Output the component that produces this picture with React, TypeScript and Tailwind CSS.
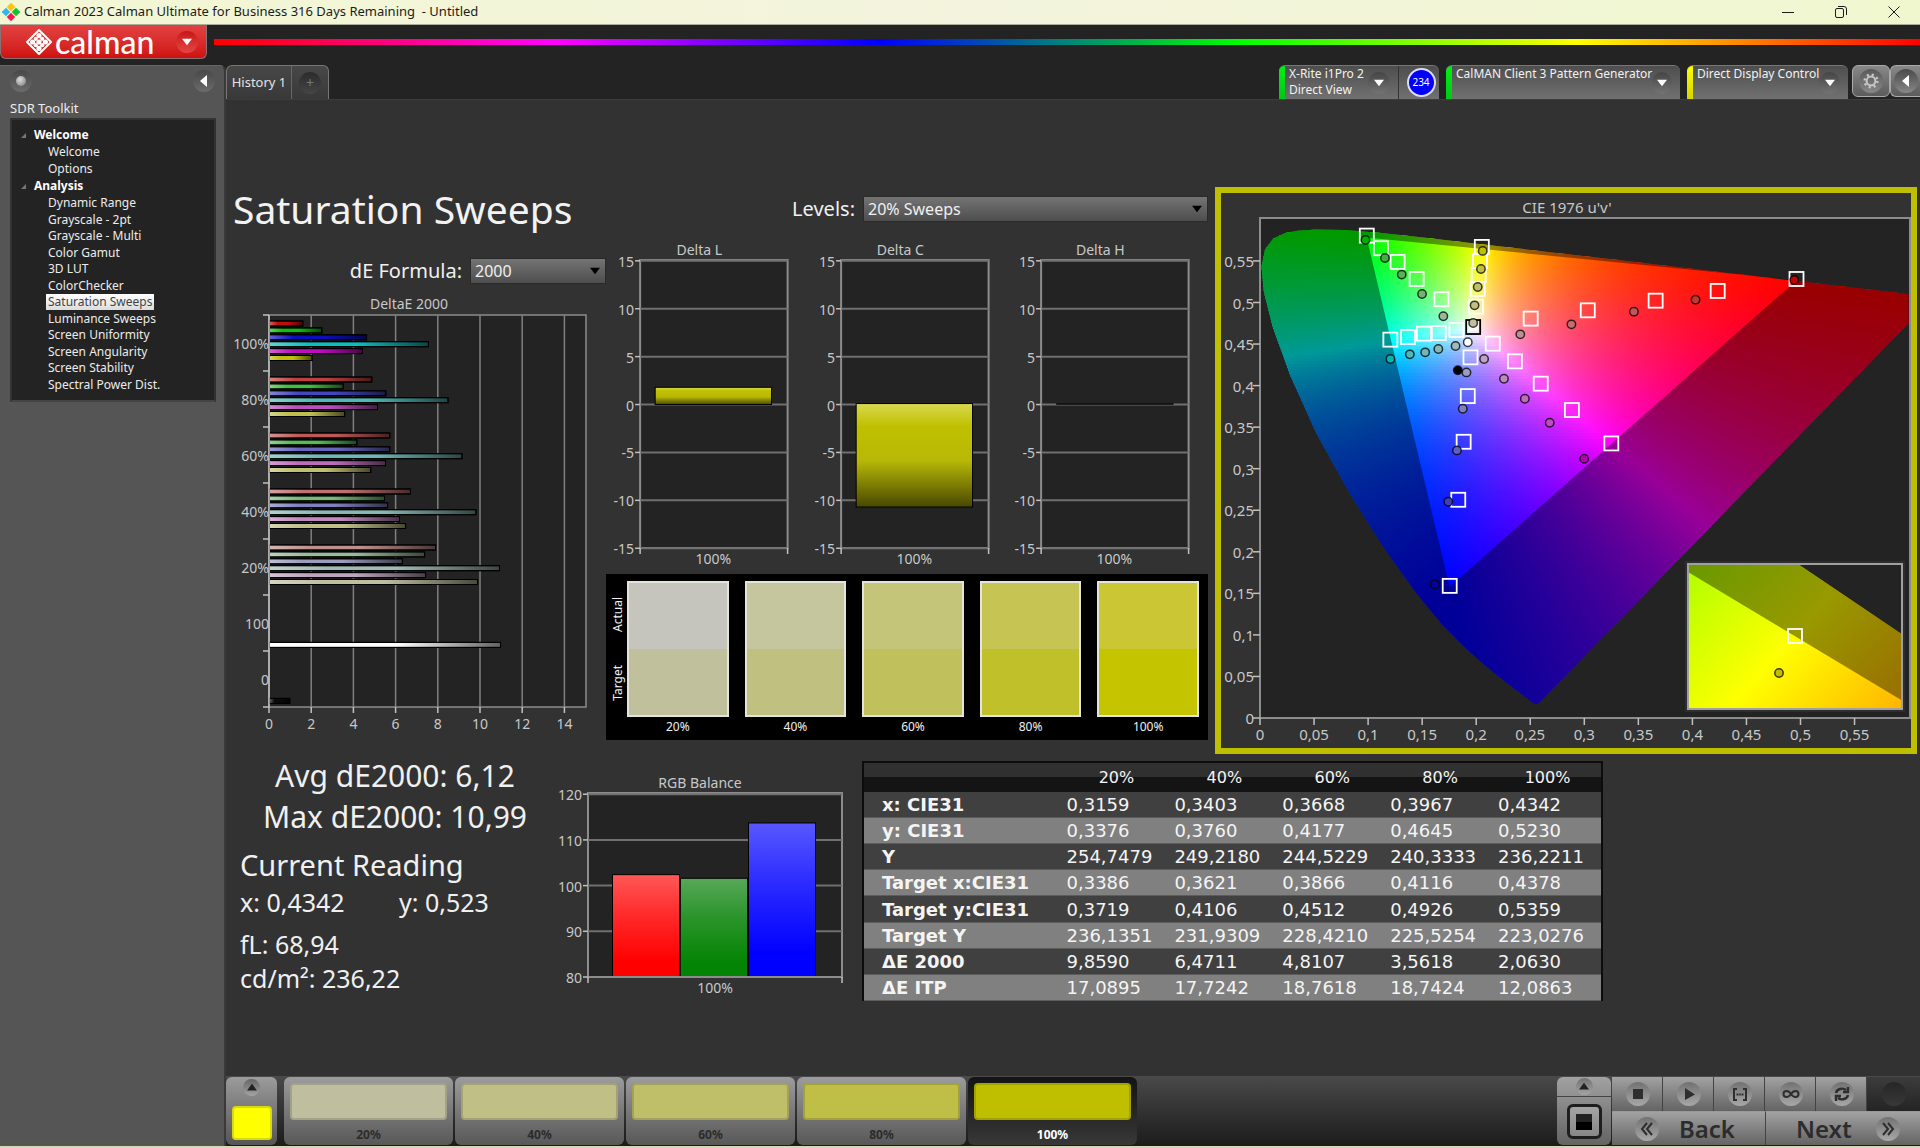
import { useMemo } from 'react';
import type { ReactNode } from 'react';

const treeAnalysis = [
    'Dynamic Range',
    'Grayscale - 2pt',
    'Grayscale - Multi',
    'Color Gamut',
    '3D LUT',
    'ColorChecker',
    'Saturation Sweeps',
    'Luminance Sweeps',
    'Screen Uniformity',
    'Screen Angularity',
    'Screen Stability',
    'Spectral Power Dist.',
];

/* ---------- small controls ---------- */

function Triangle({ dir, className }: { dir: 'down' | 'left' | 'up'; className: string }) {
    const d = { down: 'M0 2H12L6 10Z', left: 'M9 0V12L2 6Z', up: 'M0 9H12L6 1Z' }[dir];
    return (
        <svg viewBox="0 0 12 12" className={className} aria-hidden="true">
            <path d={d} fill="currentColor" />
        </svg>
    );
}

interface DropProps {
    id: string;
    value: string;
    className: string;
}

function DropDown({ id, value, className }: DropProps) {
    return (
        <div className={`relative ${className}`}>
            <select
                id={id}
                className="block h-[26px] w-full appearance-none border border-[#2a2a2a] bg-linear-to-b from-[#747474] to-[#4e4e4e] pl-1 text-base leading-6 text-[#f0f0f0]"
            >
                <option>{value}</option>
            </select>
            <Triangle dir="down" className="pointer-events-none absolute top-2 right-1.5 size-2.5 text-black" />
        </div>
    );
}

/* ---------- top of the window ---------- */

function TitleBar() {
    return (
        <div className="flex h-[25px] items-center border-b border-[#a9ac96] bg-linear-to-r from-[#f2f7d3] via-[#f4f4de] to-[#f0f7cf] text-[#1c1c1c]">
            <svg viewBox="0 0 18 18" className="ml-[2px] size-[18px]" aria-hidden="true">
                <rect x="6" y="1" width="6" height="6" transform="rotate(45 9 4)" fill="#ffc20e" />
                <rect x="1" y="6" width="6" height="6" transform="rotate(45 4 9)" fill="#35b6e8" />
                <rect x="11" y="6" width="6" height="6" transform="rotate(45 14 9)" fill="#10c430" />
                <rect x="6" y="11" width="6" height="6" transform="rotate(45 9 14)" fill="#ff1450" />
            </svg>
            <span className="ml-1 text-[13px] whitespace-pre">
                {'Calman 2023 Calman Ultimate for Business 316 Days Remaining  - Untitled'}
            </span>
            <div className="ml-auto flex">
                <button aria-label="Minimize" className="flex h-6 w-[53px] items-center justify-center">
                    <svg viewBox="0 0 12 12" className="size-3" stroke="currentColor">
                        <path d="M0 6.5H12" />
                    </svg>
                </button>
                <button aria-label="Restore" className="flex h-6 w-[53px] items-center justify-center">
                    <svg viewBox="0 0 12 12" className="size-3" stroke="currentColor" fill="none">
                        <rect x="0.5" y="2.5" width="8" height="9" rx="1.5" />
                        <path d="M3 0.5H9Q11.5 0.5 11.5 3V9" />
                    </svg>
                </button>
                <button aria-label="Close" className="flex h-6 w-[53px] items-center justify-center">
                    <svg viewBox="0 0 12 12" className="size-3" stroke="currentColor">
                        <path d="M0.5 0.5L11.5 11.5M11.5 0.5L0.5 11.5" />
                    </svg>
                </button>
            </div>
        </div>
    );
}

function LogoRow() {
    return (
        <div className="flex h-10 items-start">
            <button
                aria-label="Calman menu"
                className="flex h-[34px] w-[207px] shrink-0 items-center rounded-b-md border border-t-0 border-[#8a7272] bg-linear-to-b from-[#e24141] to-[#cf0f0f] pl-6 text-white"
            >
                <svg viewBox="0 0 28 28" className="size-7" fill="none" stroke="#fff" aria-hidden="true">
                    <path d="M14 2L26 14L14 26L2 14Z" strokeWidth="2" strokeLinejoin="round" />
                    <g fill="#fff" stroke="none">
                        <circle cx="14" cy="7.6" r="2.6" />
                        <circle cx="10.8" cy="10.8" r="2.1" />
                        <circle cx="17.2" cy="10.8" r="2.1" />
                        <circle cx="7.6" cy="14" r="2.6" />
                        <circle cx="14" cy="14" r="2.6" />
                        <circle cx="20.4" cy="14" r="2.6" />
                        <circle cx="10.8" cy="17.2" r="2.1" />
                        <circle cx="17.2" cy="17.2" r="2.1" />
                        <circle cx="14" cy="20.4" r="2.6" />
                    </g>
                </svg>
                <span className="ml-[2px] font-[Lato,sans-serif] text-[32px] leading-8 font-medium">calman</span>
                <span className="mr-2 ml-auto flex size-[22px] items-center justify-center rounded-full bg-linear-to-b from-[#c81414] to-[#e44444]">
                    <Triangle dir="down" className="size-2.5" />
                </span>
            </button>
            <div className="mt-3.5 ml-[7px] h-1.5 flex-1 bg-linear-[90deg,#f00,#f0f_20%,#00f_39%,#0f0_60%,#ff0_80%,#f00]" />
        </div>
    );
}

interface DeviceProps {
    stripe: string;
    lines: string[];
    width: string;
    children?: ReactNode;
}

function Device({ stripe, lines, width, children }: DeviceProps) {
    return (
        <div className={`flex h-[34px] overflow-hidden rounded-t-md border-t border-[#777] bg-linear-to-b from-[#4e4e4e] to-[#717171] ${width}`}>
            <div className={`w-[6px] shrink-0 ${stripe}`} />
            <div className="flex-1 pl-1 text-xs leading-4 whitespace-nowrap text-[#f2f2f2]">
                {lines.map((line) => (
                    <div key={line}>{line}</div>
                ))}
            </div>
            <button
                aria-label={`${lines[0]} menu`}
                className="mt-1.5 mr-2 flex size-[22px] items-center justify-center self-start rounded-full bg-linear-to-b from-[#454545] to-[#747474] text-white"
            >
                <Triangle dir="down" className="size-2.5" />
            </button>
            {children}
        </div>
    );
}

function TabRow() {
    return (
        <div className="flex h-[34px] bg-[#232323]">
            <div className="flex h-[34px] items-stretch rounded-t-md border border-b-0 border-[#777] bg-linear-to-b from-[#484848] to-[#383838]">
                <button className="w-[65px] border-r border-[#666] text-[13px] text-[#e4e4e4]">History 1</button>
                <button aria-label="Add history" className="flex w-9 items-center justify-center">
                    <span className="flex size-[22px] items-center justify-center rounded-full bg-linear-to-b from-[#2c2c2c] to-[#454545] text-sm text-[#777]">
                        +
                    </span>
                </button>
            </div>
            <div className="ml-auto flex gap-[7px]">
                <Device stripe="bg-linear-to-b from-[#00f010] to-[#00c818]" lines={['X-Rite i1Pro 2', 'Direct View']} width="w-[160px]">
                    <div className="flex w-[41px] items-center justify-center border-l border-[#333] pl-1">
                        <span className="flex size-[29px] items-center justify-center rounded-full border-2 border-[#dcdcf4] bg-[#0000fa] text-[10px] text-white">
                            234
                        </span>
                    </div>
                </Device>
                <Device stripe="bg-linear-to-b from-[#00f010] to-[#00c818]" lines={['CalMAN Client 3 Pattern Generator']} width="w-[234px]" />
                <Device stripe="bg-linear-to-b from-[#ffff00] to-[#d4d400]" lines={['Direct Display Control']} width="w-[161px]" />
            </div>
            <div className="ml-1 flex h-8">
                <button
                    aria-label="Settings"
                    className="flex w-[38px] items-center justify-center rounded-md border border-[#aaa] bg-linear-to-b from-[#888] to-[#5c5c5c]"
                >
                    <span className="flex size-6 items-center justify-center rounded-full bg-linear-to-b from-[#5a5a5a] to-[#888]">
                        <svg viewBox="0 0 20 20" className="size-4" fill="none" stroke="#c8c8c8" aria-hidden="true">
                            <circle cx="10" cy="10" r="5.5" strokeWidth="2.5" />
                            <circle cx="10" cy="10" r="8" strokeWidth="3" strokeDasharray="2.6 3.683" />
                        </svg>
                    </span>
                </button>
                <button
                    aria-label="Collapse right panel"
                    className="flex w-[30px] items-center justify-center rounded-l-md border border-r-0 border-[#aaa] bg-linear-to-b from-[#888] to-[#5c5c5c] text-white"
                >
                    <span className="flex size-6 items-center justify-center rounded-full bg-linear-to-b from-[#4a4a4a] to-[#888]">
                        <Triangle dir="left" className="size-3" />
                    </span>
                </button>
            </div>
        </div>
    );
}

/* ---------- workflow tree ---------- */

function Sidebar() {
    return (
        <aside className="w-[226px] shrink-0 rounded-tr-md border-t border-r-2 border-t-[#666] border-r-[#3a3a3a] bg-[#555] pr-2 pl-[10px]">
            <div className="flex h-[30px] items-center justify-between">
                <span className="flex size-[22px] items-center justify-center rounded-full bg-linear-to-b from-[#484848] to-[#6c6c6c]">
                    <span className="size-2.5 rounded-full bg-radial-[at_40%_35%] from-[#ddd] to-[#777]" />
                </span>
                <button
                    aria-label="Collapse workflow"
                    className="mr-px flex size-[22px] items-center justify-center rounded-full bg-linear-to-b from-[#484848] to-[#6c6c6c] text-white"
                >
                    <Triangle dir="left" className="size-3" />
                </button>
            </div>
            <h2 className="mt-[2px] text-[13px] leading-[20px] text-[#ececec]">SDR Toolkit</h2>
            <nav className="h-[284px] border-2 border-[#333] border-b-[#444] bg-[#232323] pt-1.5 text-xs text-[#ececec]">
                <div className="flex h-[18px] items-center font-bold text-white">
                    <TreeMark />
                    Welcome
                </div>
                <ul className="grid h-[33px] pl-9">
                    <li className="flex items-center"><a href="#welcome">Welcome</a></li>
                    <li className="flex items-center"><a href="#options">Options</a></li>
                </ul>
                <div className="flex h-[18px] items-center font-bold text-white">
                    <TreeMark />
                    Analysis
                </div>
                <ul className="grid h-[198px] pl-9">
                    {treeAnalysis.map((item) => (
                        <li key={item} className="flex items-center">
                            <a
                                href={`#${item}`}
                                className={
                                    item === 'Saturation Sweeps'
                                        ? '-ml-0.5 bg-linear-to-b from-white to-[#dcdcdc] px-0.5 leading-4 text-[#444]'
                                        : 'leading-4'
                                }
                            >
                                {item}
                            </a>
                        </li>
                    ))}
                </ul>
            </nav>
        </aside>
    );
}

function TreeMark() {
    return (
        <svg viewBox="0 0 6 6" className="mr-2 ml-[9px] size-[5px]" aria-hidden="true">
            <path d="M6 0V6H0Z" fill="#777" />
        </svg>
    );
}

/* ---------- DeltaE bars ---------- */

const bands: { label: string; bars: [string, number][] }[] = [
    { label: '100%', bars: [['#bf0c0c', 1.58], ['#0cbf0c', 2.48], ['#0c0cbf', 4.6], ['#0cbfbf', 7.53], ['#bf0cbf', 4.4], ['#bfbf0c', 2.02]] },
    { label: '80%', bars: [['#bf4040', 4.85], ['#40bf40', 3.49], ['#4545bf', 5.51], ['#50b8b8', 8.46], ['#bf4cbf', 5.12], ['#bfbf50', 3.56]] },
    { label: '60%', bars: [['#bf5858', 5.7], ['#58bb58', 4.14], ['#6666bf', 5.7], ['#70b8b8', 9.12], ['#bf6cbf', 5.5], ['#bfbf70', 4.8]] },
    { label: '40%', bars: [['#bf7070', 6.68], ['#78bb78', 5.45], ['#8080bf', 5.6], ['#88b8b4', 9.78], ['#bf88bf', 6.16], ['#bfbf88', 6.45]] },
    { label: '20%', bars: [['#bf8e8e', 7.87], ['#98bb98', 7.35], ['#9c9cbf', 6.3], ['#a0bbb6', 10.9], ['#bfa4bf', 7.4], ['#bfbfa0', 9.86]] },
    { label: '100', bars: [['#ffffff', 10.95]] },
    { label: '0', bars: [['#0a0a0a', 0.96]] },
];

function DeltaEChart() {
    const x = (v: number) => 43 + v * 21.1;
    const bandTop = (i: number) => 30 + i * 56;
    return (
        <svg viewBox="0 0 380 460" className="block w-full text-sm" fill="#c8c8c8">
            <defs>
                <linearGradient id="barShade">
                    <stop offset="0" stopColor="#fff" stopOpacity="0.35" />
                    <stop offset="0.25" stopColor="#fff" stopOpacity="0" />
                    <stop offset="0.55" stopColor="#000" stopOpacity="0" />
                    <stop offset="1" stopColor="#000" stopOpacity="0.62" />
                </linearGradient>
            </defs>
            <text x="183" y="24" textAnchor="middle">DeltaE 2000</text>
            <rect x="43" y="30" width="317" height="392" fill="#232323" stroke="#8c8c8c" strokeWidth="1.5" />
            {[2, 4, 6, 8, 10, 12, 14].map((v) => (
                <path key={v} d={`M${x(v)} 30V422`} stroke="#808080" strokeWidth="1.5" />
            ))}
            {[0, 2, 4, 6, 8, 10, 12, 14].map((v) => (
                <g key={v}>
                    <path d={`M${x(v)} 422v6`} stroke="#c0c0c0" strokeWidth="1.5" />
                    <text x={x(v)} y="444" textAnchor="middle">{v}</text>
                </g>
            ))}
            {bands.map((band, i) => (
                <g key={band.label}>
                    <path d={`M37 ${bandTop(i)}h6`} stroke="#c0c0c0" strokeWidth="1.5" />
                    <text x="43" y={bandTop(i) + 34} textAnchor="end">{band.label}</text>
                    {band.bars.map(([color, value], n) => {
                        const slot = band.bars.length === 1 ? 6 : n;
                        const y = bandTop(i) + 6 + slot * 6.9;
                        return (
                            <g key={n} stroke="#000">
                                <rect x="43.5" y={y} width={value * 21.1} height="5" fill={color} />
                                <rect x="43.5" y={y} width={value * 21.1} height="5" fill="url(#barShade)" />
                            </g>
                        );
                    })}
                </g>
            ))}
            <path d="M37 422h6M43 30V422" stroke="#c0c0c0" strokeWidth="1.5" />
        </svg>
    );
}

/* ---------- Delta L / C / H ---------- */

function DeltaChart({ name, value }: { name: string; value: number }) {
    const y = (v: number) => 165 - v * 9.55;
    const top = value > 0 ? y(value) : y(0) - 1;
    const height = Math.abs(value) * 9.55;
    return (
        <svg viewBox="0 0 200 327" className="block w-full text-sm" fill="#c8c8c8">
            <defs>
                <linearGradient id={`fill-${name}`} x2="0" y2="1">
                    <stop offset="0" stopColor="#d8d850" />
                    <stop offset="0.22" stopColor="#c0c000" />
                    <stop offset="0.55" stopColor="#b8b808" />
                    <stop offset="1" stopColor="#484800" />
                </linearGradient>
            </defs>
            <text x="93" y="16" textAnchor="middle">{`Delta ${name}`}</text>
            <rect x="34" y="21" width="147" height="287" fill="#232323" stroke="#8c8c8c" strokeWidth="2" />
            {[15, 10, 5, 0, -5, -10, -15].map((v) => (
                <g key={v}>
                    <path d={`M34 ${y(v)}H181`} stroke="#707070" strokeWidth="2" />
                    <path d={`M29 ${y(v)}H34`} stroke="#c0c0c0" strokeWidth="1.5" />
                    <text x="28" y={y(v) + 6} textAnchor="end">{v}</text>
                </g>
            ))}
            <path d="M34 308v6M181 308v6" stroke="#c0c0c0" strokeWidth="1.5" />
            {height > 1 ? (
                <rect x="49" y={top} width="116" height={height} fill={`url(#fill-${name})`} stroke="#000" />
            ) : (
                <path d="M49 164.5H166" stroke="#000" strokeWidth="1.5" />
            )}
            <text x="107" y="324" textAnchor="middle">100%</text>
        </svg>
    );
}

/* ---------- actual / target swatches ---------- */

const swatches = [
    { label: '20%', actual: 'bg-[#c5c5bd]', target: 'bg-[#c0c09d]', level: 'bg-[#bfbfa0]' },
    { label: '40%', actual: 'bg-[#c5c59e]', target: 'bg-[#c0c080]', level: 'bg-[#bfbf86]' },
    { label: '60%', actual: 'bg-[#c5c57a]', target: 'bg-[#c0c05c]', level: 'bg-[#bfbf6a]' },
    { label: '80%', actual: 'bg-[#c6c452]', target: 'bg-[#c0c02a]', level: 'bg-[#bfbf48]' },
    { label: '100%', actual: 'bg-[#cac634]', target: 'bg-[#c4c400]', level: 'bg-[#bfbf00]' },
];

function SwatchPanel() {
    return (
        <div className="mr-[7px] flex h-[166px] bg-black pt-[7px] pr-[9px] pl-[3px] text-xs text-[#f0f0f0]">
            <div className="flex h-[136px] w-[18px] flex-col items-center justify-around">
                <span className="rotate-180 leading-4 [writing-mode:vertical-rl]">Actual</span>
                <span className="rotate-180 leading-4 [writing-mode:vertical-rl]">Target</span>
            </div>
            <div className="grid flex-1 grid-cols-5 gap-4">
                {swatches.map((s) => (
                    <div key={s.label} className="text-center">
                        <div className="flex h-[136px] flex-col border-2 border-[#e4e4dc]">
                            <div className={`flex-1 ${s.actual}`} />
                            <div className={`flex-1 ${s.target}`} />
                        </div>
                        <div className="leading-5">{s.label}</div>
                    </div>
                ))}
            </div>
        </div>
    );
}

/* ---------- CIE 1976 u'v' diagram ---------- */

type Pt = [number, number];

const locus: Pt[] = [
    [0.2569, 0.0165], [0.2535, 0.0175], [0.2461, 0.0245], [0.2347, 0.0362], [0.2161, 0.0549], [0.2033, 0.0689],
    [0.1877, 0.0871], [0.169, 0.1119], [0.1441, 0.151], [0.1147, 0.2044], [0.0828, 0.2708], [0.0521, 0.3427],
    [0.0282, 0.4117], [0.0119, 0.4698], [0.0035, 0.5131], [0.0014, 0.5432], [0.0046, 0.5638], [0.0123, 0.577],
    [0.0231, 0.5837], [0.036, 0.5865], [0.0501, 0.5875], [0.0792, 0.5872], [0.1127, 0.5836], [0.1531, 0.5779],
    [0.2026, 0.5705], [0.2623, 0.5615], [0.3315, 0.5511], [0.4035, 0.5401], [0.4691, 0.5302], [0.5202, 0.5223],
    [0.583, 0.5125], [0.6234, 0.5065],
];
const gamut: Pt[] = [[0.4964, 0.5268], [0.0986, 0.5782], [0.1754, 0.1579]];

const targets: Pt[] = [
    [0.0988, 0.5805], [0.1118, 0.5653], [0.1273, 0.5488], [0.1449, 0.5283], [0.1679, 0.5039],
    [0.2052, 0.5669], [0.2035, 0.55], [0.2023, 0.5332], [0.2014, 0.5163], [0.1998, 0.495],
    [0.1206, 0.4553], [0.1369, 0.4585], [0.1516, 0.4625], [0.1654, 0.4633], [0.1817, 0.4669],
    [0.1947, 0.434], [0.1922, 0.3874], [0.1884, 0.3324], [0.1834, 0.2626], [0.1755, 0.159],
    [0.2153, 0.4505], [0.2358, 0.4292], [0.2597, 0.4023], [0.2885, 0.3706], [0.325, 0.3304],
    [0.2504, 0.4806], [0.3032, 0.4906], [0.366, 0.5022], [0.4234, 0.5139], [0.4963, 0.5283],
];
const readings: [number, number, string][] = [
    [0.0976, 0.5753, '#00b000'], [0.1156, 0.5536, '#40b040'], [0.1311, 0.5336, '#58b058'], [0.1499, 0.5103, '#70b470'], [0.1696, 0.4834, '#98b898'],
    [0.206, 0.5621, '#bfbf00'], [0.2044, 0.5404, '#bfbf48'], [0.2014, 0.5187, '#bfbf6a'], [0.1985, 0.4966, '#bfbf86'], [0.1972, 0.4754, '#bfbfa0'],
    [0.1206, 0.432, '#00b4b4'], [0.1386, 0.4376, '#50b8b8'], [0.1528, 0.44, '#70b8b8'], [0.165, 0.444, '#88b8b4'], [0.1809, 0.4476, '#a0bbb6'],
    [0.1922, 0.4521, '#ffffff'], [0.183, 0.4184, '#000000'],
    [0.191, 0.4159, '#9c9cbf'], [0.1876, 0.3722, '#8080bf'], [0.1822, 0.322, '#6060bf'], [0.1742, 0.2602, '#4040b4'], [0.1616, 0.161, '#0000a8'],
    [0.2073, 0.432, '#bfa4bf'], [0.2257, 0.4083, '#bf88bf'], [0.245, 0.3842, '#bf6cbf'], [0.268, 0.3553, '#bf4cbf'], [0.2999, 0.312, '#b400b4'],
    [0.2408, 0.4617, '#bf8e8e'], [0.2881, 0.4737, '#bf7070'], [0.3459, 0.489, '#bf5858'], [0.4029, 0.5034, '#bf3838'], [0.4942, 0.5271, '#bf0000'],
];

const px = (u: number) => 39 + u * 1081;
const py = (v: number) => 525 - v * 831;
const outline = (pts: Pt[]) => `M${pts.map(([u, v]) => `${px(u).toFixed(1)} ${py(v).toFixed(1)}`).join('L')}Z`;

// most saturated display colour along the given u'v'
function uvColor(u: number, v: number) {
    const X = (9 * u) / (4 * v);
    const Z = (12 - 3 * u - 20 * v) / (4 * v);
    const rgb = [
        2.4935 * X - 0.9314 - 0.4027 * Z,
        -0.8295 * X + 1.7627 + 0.0236 * Z,
        0.0358 * X - 0.0762 + 0.9569 * Z,
    ].map((c) => Math.max(0, c));
    const max = Math.max(...rgb);
    return `rgb(${rgb.map((c) => Math.round((255 * c) / max)).join(' ')})`;
}

const STRIP = 3;
const STOPS = 64;

function ColorField() {
    const rows = useMemo(() => {
        const list: { y: number; stops: string[] }[] = [];
        for (let y = 30; y < 516; y += STRIP) {
            const v = (525 - y - STRIP / 2) / 831;
            const stops = [];
            for (let i = 0; i <= STOPS; i++) {
                stops.push(uvColor((0.6 * i) / STOPS, v));
            }
            list.push({ y, stops });
        }
        return list;
    }, []);

    return (
        <g clipPath="url(#locusClip)">
            {rows.map((row) => (
                <g key={row.y}>
                    <linearGradient id={`row${row.y}`}>
                        {row.stops.map((color, i) => (
                            <stop key={i} offset={i / STOPS} stopColor={color} />
                        ))}
                    </linearGradient>
                    <rect x={px(0)} y={row.y} width={1081 * 0.6} height={STRIP + 1} fill={`url(#row${row.y})`} />
                </g>
            ))}
        </g>
    );
}

const comma = (n: number) => String(n).replace('.', ',');

function CieChart() {
    const ticks = [0, 0.05, 0.1, 0.15, 0.2, 0.25, 0.3, 0.35, 0.4, 0.45, 0.5, 0.55];
    return (
        <svg viewBox="0 0 690 555" className="block w-full text-[15px]" fill="#c8c8c8">
            <defs>
                <clipPath id="plotClip">
                    <rect x="40" y="26" width="648" height="498" />
                </clipPath>
                <clipPath id="locusClip">
                    <path d={outline(locus)} />
                </clipPath>
                <clipPath id="insetClip">
                    <rect x="467" y="371" width="214" height="145" />
                </clipPath>
                <linearGradient id="insetFill" gradientUnits="userSpaceOnUse" x1="485" y1="362" x2="670" y2="530">
                    <stop offset="0" stopColor="#b4ff00" />
                    <stop offset="0.48" stopColor="#ffff00" />
                    <stop offset="1" stopColor="#ffb400" />
                </linearGradient>
            </defs>
            <text x="346" y="20" textAnchor="middle">CIE 1976 u'v'</text>
            <rect x="39" y="25" width="650" height="500" fill="#232323" stroke="#8c8c8c" strokeWidth="2" />
            <g clipPath="url(#plotClip)">
                <ColorField />
                <path d={outline(locus) + outline(gamut)} fillRule="evenodd" fill="#000" fillOpacity="0.4" />
            </g>
            {targets.map(([u, v], i) => (
                <rect key={i} x={px(u) - 7} y={py(v) - 7} width="14" height="14" fill="none" stroke="#fff" strokeWidth="1.8" />
            ))}
            <rect x={px(0.1972) - 7} y={py(0.4705) - 7} width="14" height="14" fill="none" stroke="#000" strokeWidth="1.8" />
            {readings.map(([u, v, color], i) => (
                <circle key={i} cx={px(u)} cy={py(v)} r="4.2" fill={color} stroke="#000" strokeOpacity="0.75" strokeWidth="1.5" />
            ))}
            {ticks.map((t) => (
                <g key={t}>
                    <path d={`M${px(t)} 525v7`} stroke="#c0c0c0" strokeWidth="1.5" />
                    <text x={px(t)} y="547" textAnchor="middle">{comma(t)}</text>
                    <path d={`M32 ${py(t)}h7`} stroke="#c0c0c0" strokeWidth="1.5" />
                    <text x="33" y={py(t) + 6} textAnchor="end">{comma(t)}</text>
                </g>
            ))}
            <rect x="464" y="368" width="220" height="151" fill="#2e2e2e" />
            <rect x="467" y="371" width="214" height="145" fill="#232323" />
            <g clipPath="url(#insetClip)">
                <path d="M467 371H577L682 442V516H467Z" fill="url(#insetFill)" />
                <path d="M467 371H577L682 442V508L467 379Z" fill="#000" fillOpacity="0.4" />
            </g>
            <rect x="467" y="371" width="214" height="145" fill="none" stroke="#a0a0a0" strokeWidth="2" />
            <rect x="567" y="436" width="14" height="14" fill="none" stroke="#fff" strokeWidth="1.8" />
            <circle cx="558" cy="480" r="4.2" fill="#bfbf00" stroke="#000" strokeOpacity="0.75" strokeWidth="1.5" />
        </svg>
    );
}

/* ---------- lower row ---------- */

function Stats() {
    return (
        <div className="pt-px pl-[14px] text-[25px] leading-[34px] whitespace-nowrap text-[#f0f0f0]">
            <div className="text-center text-[30px] leading-[41px]">Avg dE2000: 6,12</div>
            <div className="text-center text-[30px] leading-[41px]">Max dE2000: 10,99</div>
            <h2 className="mt-2 text-[29px] leading-10">Current Reading</h2>
            <div className="flex">
                <div className="w-[159px]">x: 0,4342</div>
                <div>y: 0,523</div>
            </div>
            <div className="mt-2">fL: 68,94</div>
            <div>cd/m²: 236,22</div>
        </div>
    );
}

const balance = [
    { from: '#ff5858', mid: '#ff2a2a', to: '#ff0000', value: 102.4 },
    { from: '#58a858', mid: '#2a942a', to: '#048404', value: 101.6 },
    { from: '#5858ff', mid: '#2a2aff', to: '#0000ff', value: 113.7 },
];

function RgbBalance() {
    const y = (v: number) => 204 - (v - 80) * 4.57;
    return (
        <svg viewBox="0 0 312 226" className="mt-[19px] block w-full text-sm" fill="#c8c8c8">
            <text x="150" y="15" textAnchor="middle">RGB Balance</text>
            <rect x="38" y="20" width="254" height="184" fill="#232323" stroke="#8c8c8c" strokeWidth="2" />
            {[120, 110, 100, 90, 80].map((v) => (
                <g key={v}>
                    <path d={`M38 ${y(v)}H292`} stroke="#707070" strokeWidth="2" />
                    <path d={`M33 ${y(v)}H38`} stroke="#c0c0c0" strokeWidth="1.5" />
                    <text x="32" y={y(v) + 6} textAnchor="end">{v}</text>
                </g>
            ))}
            {balance.map((b, i) => (
                <g key={b.to}>
                    <linearGradient id={`bal${i}`} x2="0" y2="1">
                        <stop offset="0" stopColor={b.from} />
                        <stop offset="0.4" stopColor={b.mid} />
                        <stop offset="0.85" stopColor={b.to} />
                    </linearGradient>
                    <rect x={62.5 + i * 68} y={y(b.value)} width="67" height={204 - y(b.value)} fill={`url(#bal${i})`} stroke="#000" />
                </g>
            ))}
            <path d="M38 204H292" stroke="#8c8c8c" strokeWidth="2" />
            <path d="M38 204v6M292 204v6" stroke="#c0c0c0" strokeWidth="1.5" />
            <text x="165" y="220" textAnchor="middle">100%</text>
        </svg>
    );
}

const rows: [string, string[]][] = [
    ['x: CIE31', ['0,3159', '0,3403', '0,3668', '0,3967', '0,4342']],
    ['y: CIE31', ['0,3376', '0,3760', '0,4177', '0,4645', '0,5230']],
    ['Y', ['254,7479', '249,2180', '244,5229', '240,3333', '236,2211']],
    ['Target x:CIE31', ['0,3386', '0,3621', '0,3866', '0,4116', '0,4378']],
    ['Target y:CIE31', ['0,3719', '0,4106', '0,4512', '0,4926', '0,5359']],
    ['Target Y', ['236,1351', '231,9309', '228,4210', '225,5254', '223,0276']],
    ['ΔE 2000', ['9,8590', '6,4711', '4,8107', '3,5618', '2,0630']],
    ['ΔE ITP', ['17,0895', '17,7242', '18,7618', '18,7424', '12,0863']],
];

function ReadingsTable() {
    return (
        <table className="mt-[7px] h-[240px] w-full table-fixed border-collapse border-2 border-b-0 border-[#0c0c0c] font-['DejaVu_Sans','Noto_Sans',sans-serif] text-[18px] leading-[25px] text-[#f4f4f4]">
            <thead>
                <tr className="h-[30px] bg-linear-to-b from-[#303030] from-50% to-[#141414] to-50% text-base">
                    <td className="w-[27%]" />
                    {swatches.map((s) => (
                        <th key={s.label} scope="col" className="font-normal">
                            {s.label}
                        </th>
                    ))}
                </tr>
            </thead>
            <tbody>
                {rows.map(([name, values]) => (
                    <tr key={name} className="border-b border-[#5c5c5c] odd:bg-[#404040] even:bg-[#808080]">
                        <th scope="row" className="pl-[18px] text-left whitespace-nowrap">
                            {name}
                        </th>
                        {values.map((value) => (
                            <td key={value} className="pl-1">
                                {value}
                            </td>
                        ))}
                    </tr>
                ))}
            </tbody>
        </table>
    );
}

/* ---------- bottom bar ---------- */

function RoundIcon({ children }: { children: ReactNode }) {
    return (
        <span className="flex size-6 items-center justify-center rounded-full bg-linear-to-b from-[#727272] to-[#a8a8a8]">
            <svg viewBox="0 0 18 18" className="size-[18px]" fill="none" stroke="#2e2e2e" strokeWidth="2" aria-hidden="true">
                {children}
            </svg>
        </span>
    );
}

const transport: { name: string; icon: ReactNode }[] = [
    { name: 'Stop', icon: <rect x="4" y="4" width="10" height="10" fill="#2e2e2e" stroke="none" /> },
    { name: 'Play', icon: <path d="M5 3V15L15 9.5Z" fill="#2e2e2e" stroke="none" /> },
    { name: 'Read series', icon: <path d="M6 4H3V15H6M12 4H15V15H12M5.5 9.5H7.5M8.2 9.5H9.8M10.5 9.5H12.5" /> },
    { name: 'Continuous', icon: <path d="M9 9C7 6 6 6 4.5 6A3 3 0 0 0 4.5 12C6 12 7 12 9 9C11 6 12 6 13.5 6A3 3 0 0 1 13.5 12C12 12 11 12 9 9" /> },
    { name: 'Refresh', icon: <path strokeWidth="2.4" d="M3 8A6 5 0 0 1 13 5M15 2V7H10M15 10A6 5 0 0 1 5 13M3 16V11H8" /> },
];

const keyFace = 'bg-linear-to-b from-[#a2a2a2] to-[#646464]';

function BottomBar() {
    return (
        <footer className="flex h-[70px] items-start bg-linear-to-b from-[#4a4a4a] to-[#1c1c1c] pt-px">
            <div className="flex h-[68px] w-[51px] flex-col items-center justify-between rounded-md bg-linear-to-b from-[#9c9c9c] to-[#555] pt-0.5 pb-[5px]">
                <button aria-label="Show levels" className="flex size-[17px] items-center justify-center rounded-full bg-linear-to-b from-[#666] to-[#a4a4a4] text-[#222]">
                    <Triangle dir="up" className="size-2.5" />
                </button>
                <button aria-label="Current patch" className="h-[34px] w-10 rounded border-2 border-[#d8d810] bg-[#ffff00]" />
            </div>
            <div className="ml-[7px] flex gap-[2px]">
                {swatches.map((s) => {
                    const active = s.label === '100%';
                    return (
                        <button
                            key={s.label}
                            className={`flex h-[68px] w-[169px] flex-col items-stretch rounded-md px-1.5 pt-1.5 text-center text-xs font-bold ${
                                active ? 'bg-linear-to-b from-[#141414] to-[#383838] text-white' : 'bg-linear-to-b from-[#9c9c9c] to-[#585858] text-[#2c2c2c]'
                            }`}
                        >
                            <span className={`block h-[41px] rounded border-2 border-black/15 ${s.level}`} />
                            <span className="mt-[5px] leading-5">{s.label}</span>
                        </button>
                    );
                })}
            </div>
            <div className={`ml-auto flex h-[68px] w-[54px] shrink-0 flex-col items-center rounded-md ${keyFace}`}>
                <button aria-label="Show meter options" className="flex h-5 w-full items-center justify-center border-b border-[#444]">
                    <span className="flex size-[17px] items-center justify-center rounded-full bg-linear-to-b from-[#727272] to-[#a4a4a4] text-[#222]">
                        <Triangle dir="up" className="size-2.5" />
                    </span>
                </button>
                <button aria-label="Meter window" className="mt-[7px] flex size-[35px] items-center justify-center rounded-md border-3 border-[#1e1e1e] bg-linear-to-b from-[#a4a4a4] to-[#888]">
                    <span className="size-4 bg-linear-to-b from-[#222] from-50% to-black to-50%" />
                </button>
            </div>
            <div className="ml-px w-[308px] shrink-0">
                <div className="flex h-[34px]">
                    {transport.map((t) => (
                        <button key={t.name} aria-label={t.name} className={`flex w-[51px] items-center justify-center border-r border-[#444] pl-0.5 ${keyFace}`}>
                            <RoundIcon>{t.icon}</RoundIcon>
                        </button>
                    ))}
                    <div className="flex flex-1 items-center justify-center bg-linear-to-b from-[#3c3c3c] to-[#242424]">
                        <span className="size-6 rounded-full bg-linear-to-b from-[#262626] to-[#383838]" />
                    </div>
                </div>
                <div className="flex h-[34px] text-2xl font-semibold text-[#2c2c2c]">
                    <button className={`flex w-[154px] items-center justify-between border-t border-r border-t-[#999] border-r-[#444] pr-[30px] pl-[23px] ${keyFace}`}>
                        <RoundIcon>
                            <path d="M9 3L4 9L9 15M14 3L9 9L14 15" />
                        </RoundIcon>
                        Back
                    </button>
                    <button className={`flex flex-1 items-center justify-between border-t border-t-[#999] pr-5 pl-[30px] ${keyFace}`}>
                        Next
                        <RoundIcon>
                            <path d="M4 3L9 9L4 15M9 3L14 9L9 15" />
                        </RoundIcon>
                    </button>
                </div>
            </div>
        </footer>
    );
}

export default function App() {
    return (
        <div className="flex min-h-screen flex-col bg-[#232323] font-['Noto_Sans',sans-serif]">
            <TitleBar />
            <LogoRow />
            <div className="flex flex-1">
                <Sidebar />
                <div className="flex min-w-0 flex-1 flex-col">
                    <TabRow />
                    <main className="flex-1 border-t border-[#3c3c3c] bg-[#323232] pt-[87px]">
                        <div className="grid grid-cols-[380fr_609fr_705fr]">
                            <section className="min-w-0">
                                <h1 className="pl-[7px] text-[39px] leading-[44px] whitespace-nowrap text-[#f2f2f2]">Saturation Sweeps</h1>
                                <div className="mt-[26px] flex items-center justify-end gap-2">
                                    <label htmlFor="formula" className="text-[20px] leading-7 text-[#f0f0f0]">dE Formula:</label>
                                    <DropDown id="formula" value="2000" className="w-[136px]" />
                                </div>
                                <DeltaEChart />
                            </section>
                            <section className="min-w-0">
                                <div className="flex items-center justify-end gap-2 pt-[8px] pr-[7px]">
                                    <label htmlFor="levels" className="text-[20px] leading-7 text-[#f0f0f0]">Levels:</label>
                                    <DropDown id="levels" value="20% Sweeps" className="w-[345px]" />
                                </div>
                                <div className="mt-4 mb-[7px] grid grid-cols-3 pr-[7px]">
                                    <DeltaChart name="L" value={1.8} />
                                    <DeltaChart name="C" value={-10.8} />
                                    <DeltaChart name="H" value={-0.02} />
                                </div>
                                <SwatchPanel />
                            </section>
                            <section className="mr-[3px] min-w-0 self-start border-6 border-[#bfbf00]">
                                <CieChart />
                            </section>
                        </div>
                        <div className="grid grid-cols-[324fr_312fr_741fr_317fr]">
                            <Stats />
                            <RgbBalance />
                            <ReadingsTable />
                        </div>
                    </main>
                    <BottomBar />
                </div>
            </div>
            <div className="h-[2px] bg-[#d4d8b4]" />
        </div>
    );
}
